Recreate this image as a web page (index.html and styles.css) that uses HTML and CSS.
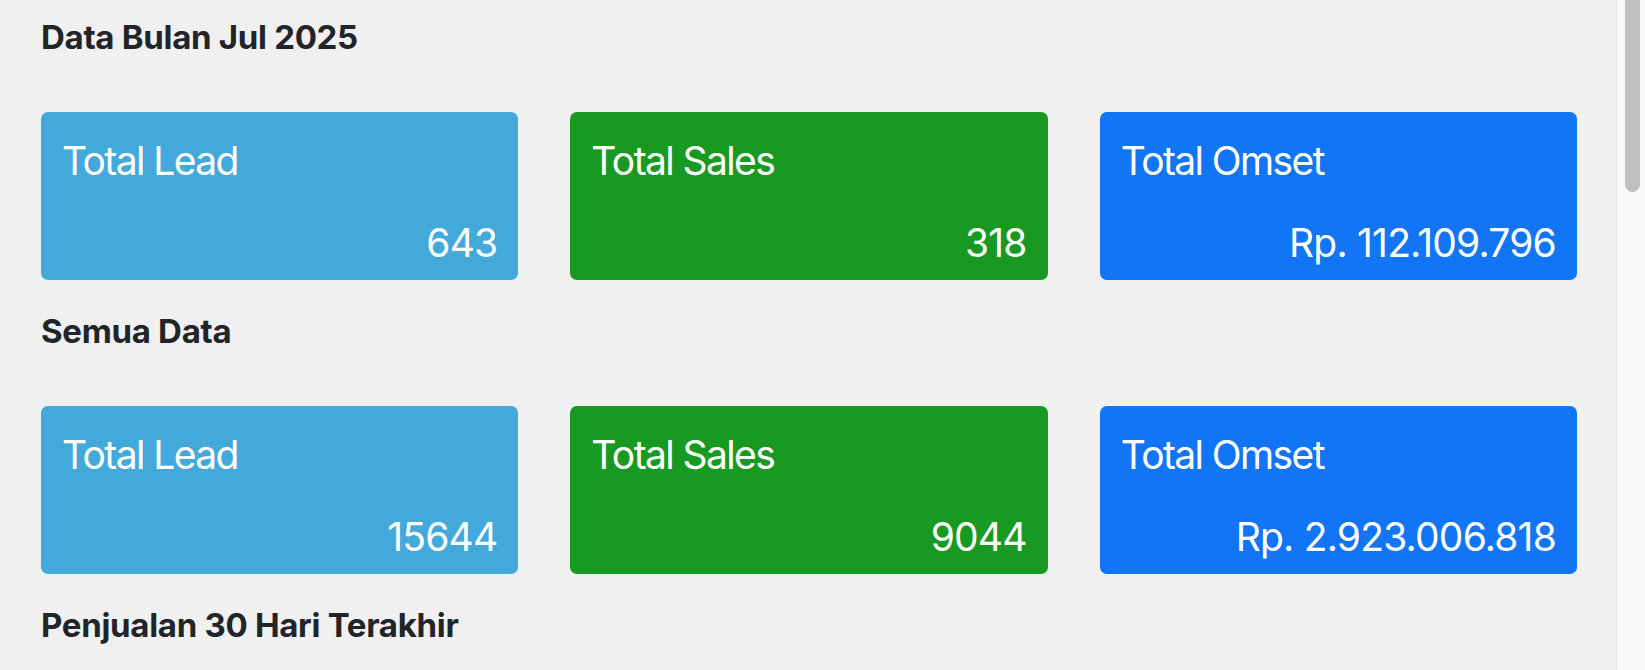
FILE: index.html
```html
<!DOCTYPE html>
<html lang="id">
<head>
  <meta charset="UTF-8" />
  <title>Dashboard</title>
  <link rel="stylesheet" href="styles.css">
</head>
<body>

  <main class="dashboard">

    <!-- Bulan ini -->
    <h2 class="section-title">Data Bulan Jul 2025</h2>
    <div class="stat-row">
      <div class="stat-card lead">
        <div class="stat-label">Total Lead</div>
        <div class="stat-value">643</div>
      </div>
      <div class="stat-card sales">
        <div class="stat-label">Total Sales</div>
        <div class="stat-value">318</div>
      </div>
      <div class="stat-card omset">
        <div class="stat-label">Total Omset</div>
        <div class="stat-value">Rp. 112.109.796</div>
      </div>
    </div>

    <!-- Semua data -->
    <h2 class="section-title">Semua Data</h2>
    <div class="stat-row">
      <div class="stat-card lead">
        <div class="stat-label">Total Lead</div>
        <div class="stat-value">15644</div>
      </div>
      <div class="stat-card sales">
        <div class="stat-label">Total Sales</div>
        <div class="stat-value">9044</div>
      </div>
      <div class="stat-card omset">
        <div class="stat-label">Total Omset</div>
        <div class="stat-value">Rp. 2.923.006.818</div>
      </div>
    </div>

    <!-- Grafik -->
    <h2 class="section-title">Penjualan 30 Hari Terakhir</h2>
    <div class="chart-box"></div>

  </main>

  <!-- Scrollbar halaman -->
  <div class="scroll-track">
    <div class="scroll-thumb"></div>
  </div>

</body>
</html>
```

FILE: styles.css
```css
body {
  margin: 0;
  font-family: "Inter", "Roboto", "Liberation Sans", sans-serif;
  background: #f0f0f0;
  color: #212529;
  display: flex;
  height: 100vh;
  overflow: hidden;
}

.dashboard {
  flex: 1;
  padding: 17px 39px 0 41px;
  overflow: hidden;
}

.scroll-track {
  width: 29px;
  box-sizing: border-box;
  background: #fafafa;
  border-left: 1px solid #e6e6e6;
  padding: 0 5px 0 8px;
  display: flex;
}

.scroll-thumb {
  flex: 1;
  height: 192px;
  background: #c1c1c1;
  border-radius: 0 0 8px 8px;
}

.section-title {
  font-size: 33px;
  line-height: 40px;
  font-weight: 700;
  letter-spacing: -0.3px;
  margin: 0 0 55px;
}

.stat-row {
  display: grid;
  grid-template-columns: repeat(3, 1fr);
  gap: 52px;
  margin-bottom: 31px;
}

.stat-card {
  height: 168px;
  box-sizing: border-box;
  padding: 25px 21px 14px;
  border-radius: 7px;
  color: #fff;
  display: flex;
  flex-direction: column;
  justify-content: space-between;
}

.stat-card.lead {
  background: #43a9da;
}

.stat-card.sales {
  background: #189a22;
}

.stat-card.omset {
  background: #1175f5;
}

.stat-label,
.stat-value {
  font-size: 39px;
  line-height: 47px;
}

.stat-label {
  letter-spacing: -1.6px;
}

.stat-value {
  text-align: right;
  letter-spacing: -0.8px;
}

.chart-box {
  height: 2300px;
}
```
